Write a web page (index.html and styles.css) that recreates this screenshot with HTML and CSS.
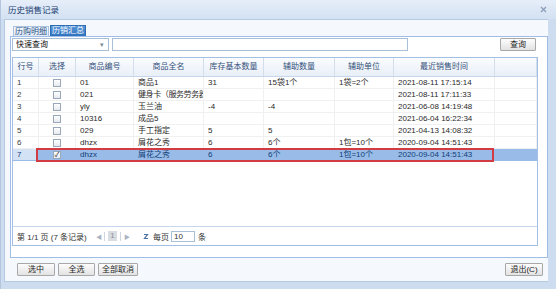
FILE: index.html
```html
<!DOCTYPE html>
<html lang="zh-CN">
<head>
<meta charset="utf-8">
<title>历史销售记录</title>
<link rel="stylesheet" href="styles.css">
</head>
<body>
<div class="win">
  <div class="titlebar">
    <span class="title">历史销售记录</span>
    <span class="close"><svg width="7" height="7" viewBox="0 0 7 7"><path d="M1 1L6 6M6 1L1 6" stroke="#8a9db8" stroke-width="1.2"/></svg></span>
  </div>
  <div class="winbody">
    <div class="tabs">
      <div class="tab">历购明细</div>
      <div class="tab active">历销汇总</div>
    </div>
    <div class="panel">
      <div class="search">
        <div class="select">快速查询<span class="arrow">▾</span></div>
        <div class="input"></div>
        <div class="btn qbtn">查询</div>
      </div>
      <div class="grid">
        <div class="row ghead">
          <div class="c">行号</div><div class="c">选择</div><div class="c">商品编号</div><div class="c">商品全名</div><div class="c">库存基本数量</div><div class="c">辅助数量</div><div class="c">辅助单位</div><div class="c">最近销售时间</div><div class="c"></div>
        </div>
        <div class="gbody">
          <div class="row">
            <div class="c rn">1</div><div class="c ck"><span class="box"></span></div><div class="c">01</div><div class="c">商品1</div><div class="c">31</div><div class="c">15袋1个</div><div class="c">1袋=2个</div><div class="c">2021-08-11 17:15:14</div><div class="c"></div>
          </div>
          <div class="row">
            <div class="c rn">2</div><div class="c ck"><span class="box"></span></div><div class="c">021</div><div class="c name-long">健身卡（服务劳务器）</div><div class="c"></div><div class="c"></div><div class="c"></div><div class="c">2021-08-11 17:11:33</div><div class="c"></div>
          </div>
          <div class="row">
            <div class="c rn">3</div><div class="c ck"><span class="box"></span></div><div class="c">yly</div><div class="c">玉兰油</div><div class="c">-4</div><div class="c">-4</div><div class="c"></div><div class="c">2021-06-08 14:19:48</div><div class="c"></div>
          </div>
          <div class="row">
            <div class="c rn">4</div><div class="c ck"><span class="box"></span></div><div class="c">10316</div><div class="c">成品5</div><div class="c"></div><div class="c"></div><div class="c"></div><div class="c">2021-06-04 16:22:34</div><div class="c"></div>
          </div>
          <div class="row">
            <div class="c rn">5</div><div class="c ck"><span class="box"></span></div><div class="c">029</div><div class="c">手工指定</div><div class="c">5</div><div class="c">5</div><div class="c"></div><div class="c">2021-04-13 14:08:32</div><div class="c"></div>
          </div>
          <div class="row">
            <div class="c rn">6</div><div class="c ck"><span class="box"></span></div><div class="c">dhzx</div><div class="c">屑花之秀</div><div class="c">6</div><div class="c">6个</div><div class="c">1包=10个</div><div class="c">2020-09-04 14:51:43</div><div class="c"></div>
          </div>
          <div class="row sel">
            <div class="c rn">7</div><div class="c ck"><span class="box on">✓</span></div><div class="c">dhzx</div><div class="c">屑花之秀</div><div class="c">6</div><div class="c">6个</div><div class="c">1包=10个</div><div class="c">2020-09-04 14:51:43</div><div class="c"></div>
            <div class="mark"></div>
          </div>
        </div>
        <div class="pager">
          <span class="ptext">第 1/1 页 (7 条记录)</span>
          <span class="pico">◀</span>
          <span class="psep"></span>
          <span class="pnum">1</span>
          <span class="psep"></span>
          <span class="pico">▶</span>
          <span class="refresh"><svg width="6" height="7" viewBox="0 0 6 7"><path d="M1 1.5H4.5L1.5 5.5H5" fill="none" stroke="#4a6fa5" stroke-width="1.2"/></svg></span>
          <span class="ptext2">每页</span>
          <span class="pinput">10</span>
          <span class="ptext3">条</span>
        </div>
      </div>
    </div>
    <div class="footer">
      <div class="btn b1">选中</div>
      <div class="btn b2">全选</div>
      <div class="btn b3">全部取消</div>
      <div class="btn bexit">退出(C)</div>
    </div>
  </div>
</div>
</body>
</html>
```

FILE: styles.css
```css
* { box-sizing: border-box; }
html, body { margin: 0; padding: 0; }
body {
  width: 556px;
  height: 289px;
  overflow: hidden;
  font-family: "Liberation Sans", "Noto Sans CJK SC", sans-serif;
  font-size: 8px;
  color: #222;
  background: #cbdaed;
}
.win {
  width: 556px;
  height: 289px;
  display: flex;
  flex-direction: column;
  background: #cddcee;
  border-left: 1px solid #b3c6dd;
  padding: 0 8px 7px 3px;
}
.titlebar {
  height: 20px;
  margin: 0 -8px 0 -3px;
  padding: 0 9px 0 7px;
  display: flex;
  align-items: center;
  justify-content: space-between;
  background: linear-gradient(#e6eef9, #d3e1f2);
}
.title {
  color: #1b3f74;
  font-size: 8.5px;
  line-height: 10px;
  padding-top: 1px;
}
.close { display: flex; width: 7px; height: 7px; }
.winbody {
  flex: 1;
  display: flex;
  flex-direction: column;
  background: #f5f8fc;
  border: 1px solid #b5c9e1;
  border-right: 0;
  padding: 5px 0 0 5px;
}
.tabs {
  display: flex;
  align-items: flex-end;
  height: 11px;
  padding-left: 3px;
  gap: 1px;
}
.tab {
  height: 10px;
  line-height: 9px;
  padding: 0 1px;
  border: 1px solid #a9c2e2;
  border-bottom: 0;
  background: linear-gradient(#f6f9fd, #e0e9f5);
  color: #274f86;
  font-size: 8px;
}
.tab.active {
  height: 11px;
  line-height: 10px;
  background: linear-gradient(#5a98d9, #2f72bd);
  border-color: #2f6bb0;
  color: #fff;
}
.panel {
  height: 222px;
  background: #fff;
  border: 1px solid #9fbde6;
  padding: 1px 9px 0 1px;
  display: flex;
  flex-direction: column;
}
.search {
  height: 13px;
  display: flex;
  align-items: stretch;
}
.select {
  width: 97px;
  border: 1px solid #a9bfd6;
  background: #fff;
  padding-left: 3px;
  line-height: 11px;
  color: #111;
  display: flex;
  justify-content: space-between;
}
.arrow { color: #7d8a99; font-size: 7px; padding-right: 4px; line-height: 11px; }
.input {
  width: 296px;
  margin-left: 3px;
  border: 1px solid #a9bfd6;
  background: #fff;
}
.btn {
  height: 13px;
  border: 1px solid #a8a8a8;
  border-radius: 1px;
  background: linear-gradient(#fdfdfd, #e2e2e2);
  color: #1f1f1f;
  text-align: center;
  line-height: 11px;
  font-size: 8px;
}
.qbtn { width: 36px; margin-left: auto; margin-right: 2px; }
.grid {
  margin-top: 6px;
  height: 189px;
  border: 1px solid #a3bfe4;
  display: flex;
  flex-direction: column;
}
.row {
  display: grid;
  grid-template-columns: 26px 37px 58px 70px 60px 71px 59px 101px 1fr;
  height: 12px;
  position: relative;
}
.c {
  padding: 0 4px;
  line-height: 11px;
  white-space: nowrap;
  overflow: hidden;
  border-right: 1px solid #f0f0f0;
  border-bottom: 1px solid #f0f0f0;
  color: #2a2a2a;
}
.name-long { padding-right: 0; letter-spacing: -0.4px; }
.ghead {
  height: 19px;
  background: linear-gradient(#fafcfe, #e9eff8);
  border-bottom: 1px solid #c6d6ec;
}
.ghead .c {
  text-align: center;
  line-height: 18px;
  border-bottom: 0;
  border-right: 1px solid #d3deec;
  color: #34507a;
  padding: 0 2px;
}
.gbody { flex: 1; background: #fff; }
.rn { color: #3d3d3d; }
.ck { display: flex; justify-content: center; align-items: center; padding: 0; }
.box {
  width: 8px;
  height: 8px;
  border: 1px solid #9aa7b8;
  background: linear-gradient(#ffffff, #e6e9ee);
  font-size: 7px;
  line-height: 6px;
  text-align: center;
  color: #1a1a1a;
}
.sel { background: #98bce7; }
.sel .c { color: #123c78; border-color: #98bce7; }
.sel .rn { background: #d3e2f4; }
.mark {
  position: absolute;
  left: 23px;
  top: -1px;
  width: 458px;
  height: 14px;
  border: 2px solid #d33b43;
  pointer-events: none;
}
.pager {
  height: 19px;
  border-top: 1px solid #c6d6ec;
  display: flex;
  align-items: center;
  padding-left: 4px;
  color: #333;
  background: #fff;
}
.ptext { width: 79px; }
.pico { color: #a9b4c2; font-size: 6px; width: 5px; }
.psep { width: 1px; height: 9px; background: #cfd6df; margin: 0 3px; }
.pnum {
  width: 9px;
  height: 10px;
  background: #d9dde2;
  color: #8a8f96;
  text-align: center;
  line-height: 10px;
}
.refresh { display: flex; margin-left: 14px; width: 10px; }
.pinput {
  width: 24px;
  height: 11px;
  border: 1px solid #a9bfd6;
  margin-left: 2px;
  padding-left: 2px;
  line-height: 9px;
}
.ptext3 { margin-left: 3px; }
.footer {
  height: 23px;
  display: flex;
  align-items: flex-start;
  padding: 5px 5px 0 7px;
  gap: 3px;
}
.b1 { width: 38px; }
.b2 { width: 37px; }
.b3 { width: 40px; }
.bexit { width: 38px; margin-left: auto; }
```
